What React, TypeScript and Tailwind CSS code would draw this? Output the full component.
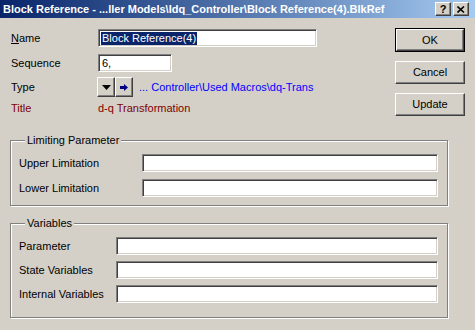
import React from "react";

const font = "font-['Liberation_Sans',Arial,sans-serif]";

// classic Win2000 sunken edit box
const sunken =
  "bg-white border border-t-[#808080] border-l-[#808080] border-b-white border-r-white shadow-[inset_1px_1px_0_#404040,inset_-1px_-1px_0_#d4d0c8]";

// raised push button
const raised =
  "bg-[#d4d0c8] border border-t-white border-l-white border-b-[#404040] border-r-[#404040] shadow-[inset_-1px_-1px_0_#808080]";

function Field({ label, labelWidth }: { label: string; labelWidth: string }) {
  return (
    <div className="flex items-center">
      <span className={`${labelWidth} shrink-0`}>{label}</span>
      <div className={`${sunken} h-[18px] flex-1`} />
    </div>
  );
}

function Group({
  title,
  children,
  className,
}: {
  title: string;
  children: React.ReactNode;
  className?: string;
}) {
  return (
    <fieldset
      className={`ml-[10px] w-[438px] border border-[#808080] shadow-[1px_1px_0_#fff,inset_1px_1px_0_#fff] pl-[8px] pr-[9px] ${className ?? ""}`}
    >
      <legend className="ml-[6px] px-[2px] bg-[#d4d0c8] leading-[14px]">{title}</legend>
      {children}
    </fieldset>
  );
}

export default function App() {
  return (
    <div className={`w-[475px] h-[330px] bg-[#d4d0c8] text-[11px] text-black overflow-hidden ${font}`}>
      {/* title bar */}
      <div className="h-[18px] flex items-center bg-gradient-to-r from-[#0a246a] to-[#a6caf0] pl-[3px] pr-[6px]">
        <span className="flex-1 text-white font-bold text-[11px] whitespace-nowrap overflow-hidden">
          Block Reference - ...ller Models\Idq_Controller\Block Reference(4).BlkRef
        </span>
        <div className="flex gap-[2px]">
          <div className={`${raised} w-[16px] h-[14px] flex items-center justify-center font-bold text-[11px] leading-none`}>
            ?
          </div>
          <div className={`${raised} w-[16px] h-[14px] flex items-center justify-center`}>
            <svg width="8" height="7" viewBox="0 0 8 7">
              <path d="M0.5 0.5 L7 6.5 M7 0.5 L0.5 6.5" stroke="#000" strokeWidth="1.6" />
            </svg>
          </div>
        </div>
      </div>

      {/* top area */}
      <div className="flex">
        <div className="flex-1 pl-[11px] pt-[11px]">
          <div className="flex items-center h-[18px]">
            <span className="w-[87px]">
              <u>N</u>ame
            </span>
            <div className={`${sunken} h-[18px] w-[219px] flex items-center pl-[2px]`}>
              <span className="bg-[#0a246a] text-white leading-[13px] px-px">Block Reference(4)</span>
            </div>
          </div>
          <div className="flex items-center h-[18px] mt-[7px]">
            <span className="w-[87px]">Sequence</span>
            <div className={`${sunken} h-[18px] w-[74px] flex items-center pl-[3px]`}>6,</div>
          </div>
          <div className="flex items-center h-[20px] mt-[5px]">
            <span className="w-[86px]">Type</span>
            <div className={`${raised} w-[18px] h-[20px] flex items-center justify-center`}>
              <svg width="9" height="5" viewBox="0 0 9 5">
                <path d="M0 0 H9 L4.5 5 Z" fill="#000" />
              </svg>
            </div>
            <div className={`${raised} w-[18px] h-[20px] flex items-center justify-center`}>
              <svg width="8" height="7" viewBox="0 0 8 7">
                <path d="M0 2 H4 V0 L8 3.5 L4 7 V5 H0 Z" fill="#000080" />
              </svg>
            </div>
            <span className="ml-[6px] text-[#0000ff]">... Controller\Used Macros\dq-Trans</span>
          </div>
          <div className="flex items-center h-[16px] mt-[3px] text-[#800000]">
            <span className="w-[87px]">Title</span>
            <span>d-q Transformation</span>
          </div>
        </div>

        <div className="w-[80px] pt-[10px] flex flex-col gap-[9px]">
          <div className="w-[70px] h-[24px] border border-black">
            <div className={`${raised} w-full h-full flex items-center justify-center`}>OK</div>
          </div>
          <div className={`${raised} w-[70px] h-[23px] flex items-center justify-center`}>Cancel</div>
          <div className={`${raised} w-[70px] h-[23px] flex items-center justify-center`}>Update</div>
        </div>
      </div>

      <Group title="Limiting Parameter" className="mt-[17px] pt-[7px] pb-[8px]">
        <div className="flex flex-col gap-[7px]">
          <Field label="Upper Limitation" labelWidth="w-[123px]" />
          <Field label="Lower Limitation" labelWidth="w-[123px]" />
        </div>
      </Group>

      <Group title="Variables" className="mt-[10px] pt-[7px] pb-[14px]">
        <div className="flex flex-col gap-[6px]">
          <Field label="Parameter" labelWidth="w-[97px]" />
          <Field label="State Variables" labelWidth="w-[97px]" />
          <Field label="Internal Variables" labelWidth="w-[97px]" />
        </div>
      </Group>
    </div>
  );
}
